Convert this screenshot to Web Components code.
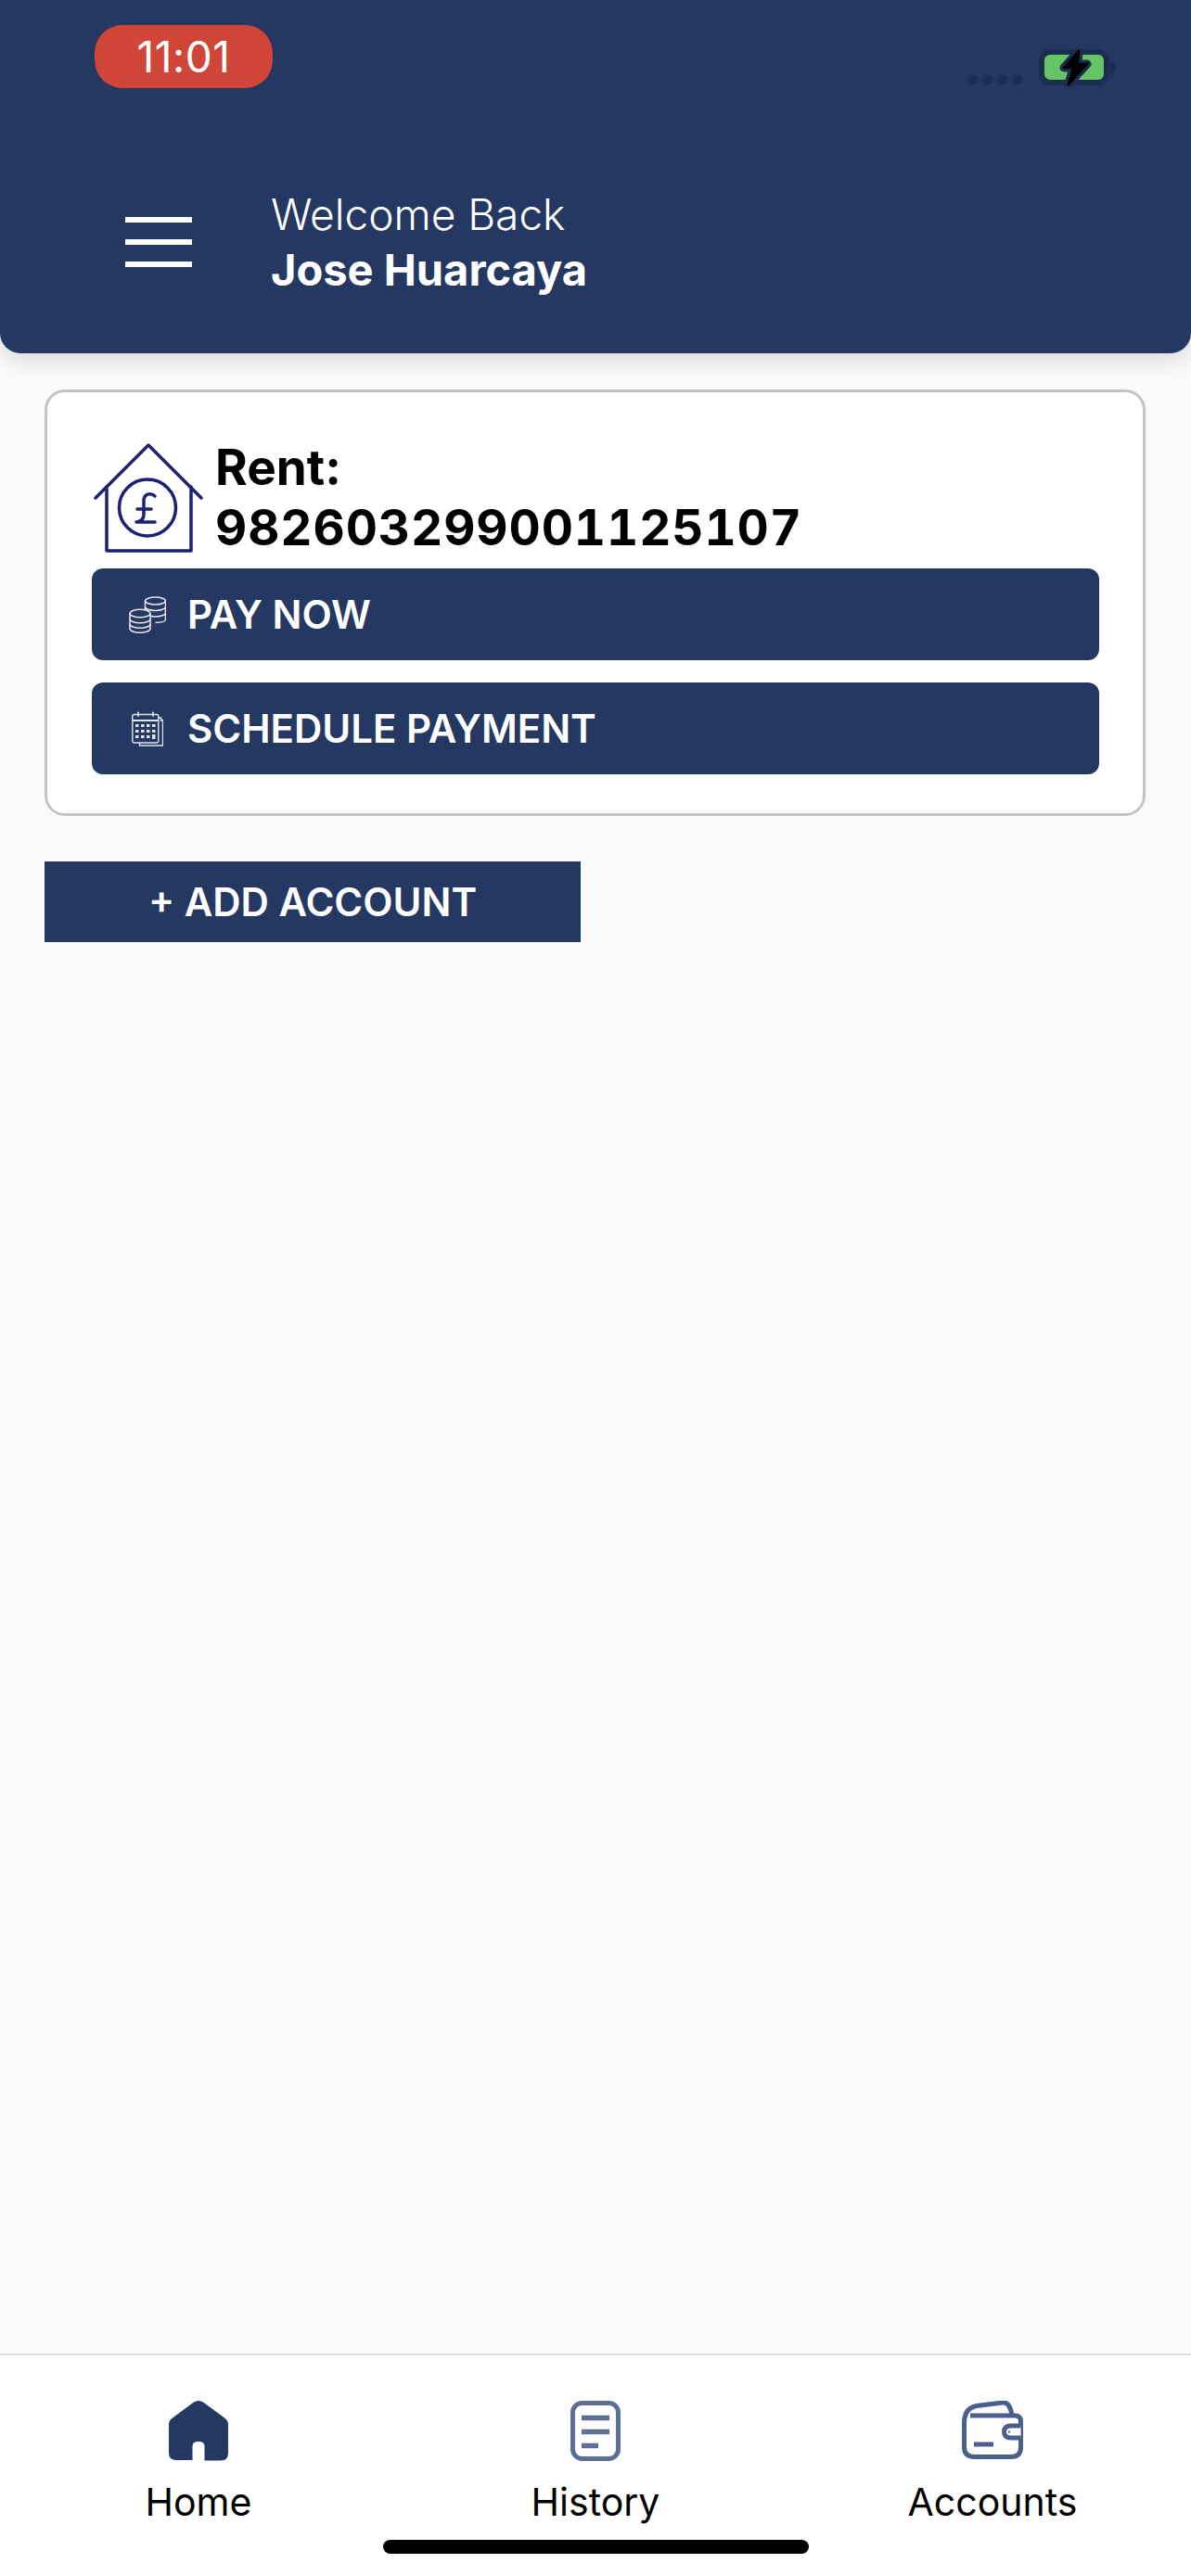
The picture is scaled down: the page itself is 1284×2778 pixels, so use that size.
<!DOCTYPE html>
<html lang="en">
<head>
<meta charset="utf-8">
<title>Home</title>
<style>
  html, body { margin: 0; padding: 0; }
  body {
    width: 1284px;
    height: 2778px;
    display: flex;
    flex-direction: column;
    overflow: hidden;
    background: #fafafa;
    font-family: Inter, "Liberation Sans", sans-serif;
  }
  main { flex: 1; display: block; }
</style>
</head>
<body>
<app-header name="Jose Huarcaya"></app-header>
<main>
  <account-card title-text="Rent:" number="982603299001125107">
    <action-button icon="coins">PAY NOW</action-button>
    <action-button icon="calendar">SCHEDULE PAYMENT</action-button>
  </account-card>
  <add-account>+ ADD ACCOUNT</add-account>
</main>
<tab-bar>
  <tab-item icon="home">Home</tab-item>
  <tab-item icon="history">History</tab-item>
  <tab-item icon="wallet">Accounts</tab-item>
</tab-bar>

<script>
const icons = {
  coins: `<svg width="40" height="40" viewBox="0 0 40 40" fill="none" stroke="#e4e7ee" stroke-width="1.500">
    <ellipse cx="28.5" cy="5" rx="11" ry="4"/>
    <path d="M17.5 5v20M39.500 5v20c0 2-4 3.400-11 3.400M17.500 11.500c0 2.200 5 4 11 4s11-1.800 11-4M17.500 18c0 2.200 5 4 11 4s11-1.800 11-4"/>
    <path fill="#243862" d="M1 18.500c0-2.400 5-4.300 11-4.300s11 1.900 11 4.300v16.500c0 2.400-5 4.300-11 4.300s-11-1.900-11-4.300z"/>
    <path d="M1 18.500c0 2.400 5 4.300 11 4.300s11-1.900 11-4.300M1 24.500c0 2.400 5 4.300 11 4.300s11-1.900 11-4.300M1 30c0 2.400 5 4.300 11 4.300s11-1.900 11-4.300"/>
  </svg>`,
  calendar: `<svg width="34" height="38" viewBox="0 0 34 38" fill="none" stroke="#dfe3eb" stroke-width="1.400">
    <path d="M29 7h2.500v4M31.500 9.500h2v27.500h-25v-3"/>
    <rect x=".8" y="3.500" width="28" height="30.500" rx="2"/>
    <path d="M.8 10h28M7 .8v5M23 .8v5" stroke-width="1.800"/>
    <g fill="#dfe3eb" stroke="none">
      <rect x="4" y="14" width="3.500" height="3"/><rect x="10" y="14" width="3.500" height="3"/><rect x="16" y="14" width="3.500" height="3"/><rect x="22" y="14" width="3.500" height="3"/>
      <rect x="4" y="20" width="3.500" height="3"/><rect x="10" y="20" width="3.500" height="3"/><rect x="16" y="20" width="3.500" height="3"/><rect x="22" y="20" width="3.500" height="3"/>
      <rect x="4" y="26" width="3.500" height="3"/><rect x="10" y="26" width="3.500" height="3"/><rect x="16" y="26" width="3.500" height="3"/><rect x="22" y="25" width="3.500" height="5"/>
    </g>
  </svg>`,
  home: `<svg width="64" height="65" viewBox="0 0 64 65">
    <path fill="#243862" d="M27 1.500q5-3 10 0l23 17q4 3 4 7v31q0 8-8 8H38.500V49q0-5-6.500-5t-6.500 5v15H8q-8 0-8-8V25.500q0-4 4-7z"/>
  </svg>`,
  history: `<svg width="54" height="65" viewBox="0 0 54 65" fill="none" stroke="#5e6f96" stroke-width="5">
    <rect x="2.500" y="2.500" width="49" height="60" rx="10"/>
    <path d="M12 18.500h30M12 33.500h30M12 48.500h18" stroke-width="5.500"/>
  </svg>`,
  wallet: `<svg width="66" height="63" viewBox="0 0 66 63" fill="none" stroke="#4a5f8d" stroke-width="5">
    <path d="M9 16h48q6.500 0 6.500 6.500V50q0 10.500-10.500 10.500H14Q2.500 60.500 2.500 50V24Q2.500 8 16 5.500L44 2q8-1 10 14"/>
    <path d="M63.500 27H53q-7.500 0-7.500 6.500T53 40h10.500" fill="#fff"/>
    <path d="M13 47h21"/>
    <path d="M50 33.500h2" stroke-width="2"/>
  </svg>`
}

const statusTemplate = document.createElement('template')
statusTemplate.innerHTML = `
  <style>
    :host {
      display: flex;
      justify-content: space-between;
      align-items: flex-start;
      padding: 27px 81px 0 102px;
    }
    .time {
      width: 192px;
      height: 68px;
      border-radius: 30px;
      background: #cf4639;
      color: #fff;
      font-size: 46px;
      line-height: 68px;
      text-align: center;
      font-weight: 400;
      letter-spacing: .5px;
    }
    .right {
      display: flex;
      align-items: flex-end;
      gap: 18px;
      margin-top: 25px;
    }
    .dots { display: flex; gap: 6px; padding-bottom: 3px; }
    .dots i { width: 10px; height: 10px; border-radius: 3px; background: #1c2f52; }
  </style>
  <div class="time">11:01</div>
  <div class="right">
    <div class="dots"><i></i><i></i><i></i><i></i></div>
    <svg width="83" height="42" viewBox="0 0 83 42">
      <rect x="3" y="4" width="70" height="33" rx="9" fill="#65c466" stroke="#1c2d50" stroke-width="6"/>
      <path d="M77 14q6 1 6 7t-6 7z" fill="#1c2d50"/>
      <path d="M43 3 27 21h10l-5 18 20-22H42z" fill="#1c2d50" stroke="#1c2d50" stroke-width="9" stroke-linejoin="round"/>
      <path d="M43 3 27 21h10l-5 18 20-22H42z" fill="#000" stroke="#000" stroke-width="2.500" stroke-linejoin="round"/>
    </svg>
  </div>
`
class StatusBar extends HTMLElement {
  constructor() {
    super()
    this.attachShadow({mode: 'open'}).appendChild(statusTemplate.content.cloneNode(true))
  }
}
customElements.define('status-bar', StatusBar)

const headerTemplate = document.createElement('template')
headerTemplate.innerHTML = `
  <style>
    :host {
      display: block;
      height: 381px;
      background: #243862;
      border-radius: 0 0 22px 22px;
      box-shadow: 0 8px 24px rgba(0,0,0,.13);
      color: #fff;
    }
    .row {
      display: flex;
      align-items: center;
      gap: 85px;
      padding: 107px 0 0 135px;
    }
    .menu { display: flex; flex-direction: column; gap: 18px; width: 72px; }
    .menu i { height: 6px; background: #fff; }
    .hello { font-size: 46px; line-height: 59px; font-weight: 300; }
    .name { font-size: 47px; line-height: 59px; font-weight: 700; }
  </style>
  <status-bar></status-bar>
  <div class="row">
    <div class="menu"><i></i><i></i><i></i></div>
    <div>
      <div class="hello">Welcome Back</div>
      <div class="name"></div>
    </div>
  </div>
`
class AppHeader extends HTMLElement {
  constructor() {
    super()
    this.attachShadow({mode: 'open'}).appendChild(headerTemplate.content.cloneNode(true))
    this.shadowRoot.querySelector('.name').textContent = this.getAttribute('name')
  }
}
customElements.define('app-header', AppHeader)

const cardTemplate = document.createElement('template')
cardTemplate.innerHTML = `
  <style>
    :host {
      display: block;
      box-sizing: border-box;
      width: 1187px;
      margin: 39px 0 0 48px;
      padding: 49px 47px 42px 48px;
      background: #fff;
      border: 3px solid #c4c4c4;
      border-radius: 22px;
    }
    .top { display: flex; gap: 13px; margin-bottom: 11px; }
    svg { flex: none; margin: 6px 0 0 2px; }
    .text { font-size: 53px; line-height: 65px; font-weight: 700; color: #000; }
    .number { font-variant-numeric: tabular-nums; font-feature-settings: "tnum"; letter-spacing: .9px; }
    .buttons { display: flex; flex-direction: column; gap: 24px; }
  </style>
  <div class="top">
    <svg width="118" height="118" viewBox="0 0 118 118" fill="none" stroke="#1d2175" stroke-width="3.500" stroke-linecap="round" stroke-linejoin="round">
      <path d="M2 59 59 2l57 57"/>
      <path d="M14 47v69h91V47"/>
      <circle cx="58" cy="69.500" r="30.500"/>
      <path d="M66 57c-3-3-11-4-12 4v16c0 4-2 7-8 8h20M47 71h15"/>
    </svg>
    <div class="text"><div class="label"></div><div class="number"></div></div>
  </div>
  <div class="buttons"><slot></slot></div>
`
class AccountCard extends HTMLElement {
  constructor() {
    super()
    this.attachShadow({mode: 'open'}).appendChild(cardTemplate.content.cloneNode(true))
    this.shadowRoot.querySelector('.label').textContent = this.getAttribute('title-text')
    this.shadowRoot.querySelector('.number').textContent = this.getAttribute('number')
  }
}
customElements.define('account-card', AccountCard)

const buttonTemplate = document.createElement('template')
buttonTemplate.innerHTML = `
  <style>
    :host {
      display: flex;
      align-items: center;
      height: 99px;
      padding-left: 40px;
      background: #243862;
      border-radius: 12px;
      color: #fff;
      font-size: 42px;
      font-weight: 600;
    }
    .icon { display: flex; justify-content: center; width: 40px; margin-right: 23px; }
  </style>
  <span class="icon"></span><slot></slot>
`
class ActionButton extends HTMLElement {
  constructor() {
    super()
    this.attachShadow({mode: 'open'}).appendChild(buttonTemplate.content.cloneNode(true))
    this.shadowRoot.querySelector('.icon').innerHTML = icons[this.getAttribute('icon')]
  }
}
customElements.define('action-button', ActionButton)

const addTemplate = document.createElement('template')
addTemplate.innerHTML = `
  <style>
    :host {
      display: flex;
      align-items: center;
      justify-content: center;
      width: 578px;
      height: 87px;
      margin: 49px 0 0 48px;
      background: #243862;
      color: #fff;
      font-size: 42px;
      font-weight: 600;
    }
  </style>
  <slot></slot>
`
class AddAccount extends HTMLElement {
  constructor() {
    super()
    this.attachShadow({mode: 'open'}).appendChild(addTemplate.content.cloneNode(true))
  }
}
customElements.define('add-account', AddAccount)

const tabBarTemplate = document.createElement('template')
tabBarTemplate.innerHTML = `
  <style>
    :host {
      display: block;
      height: 240px;
      box-sizing: border-box;
      padding-top: 49px;
      background: #fff;
      border-top: 2px solid #dcdcdc;
    }
    .tabs { display: grid; grid-template-columns: repeat(3, 1fr); }
    .indicator {
      width: 459px;
      height: 15px;
      margin: 16px auto 0;
      border-radius: 8px;
      background: #000;
    }
  </style>
  <div class="tabs"><slot></slot></div>
  <div class="indicator"></div>
`
class TabBar extends HTMLElement {
  constructor() {
    super()
    this.attachShadow({mode: 'open'}).appendChild(tabBarTemplate.content.cloneNode(true))
  }
}
customElements.define('tab-bar', TabBar)

const tabTemplate = document.createElement('template')
tabTemplate.innerHTML = `
  <style>
    :host {
      display: flex;
      flex-direction: column;
      align-items: center;
      color: #000;
      font-size: 41px;
      line-height: 50px;
      font-weight: 400;
    }
    .icon { display: flex; height: 65px; margin-bottom: 19px; }
  </style>
  <span class="icon"></span><slot></slot>
`
class TabItem extends HTMLElement {
  constructor() {
    super()
    this.attachShadow({mode: 'open'}).appendChild(tabTemplate.content.cloneNode(true))
    this.shadowRoot.querySelector('.icon').innerHTML = icons[this.getAttribute('icon')]
  }
}
customElements.define('tab-item', TabItem)
</script>
</body>
</html>
